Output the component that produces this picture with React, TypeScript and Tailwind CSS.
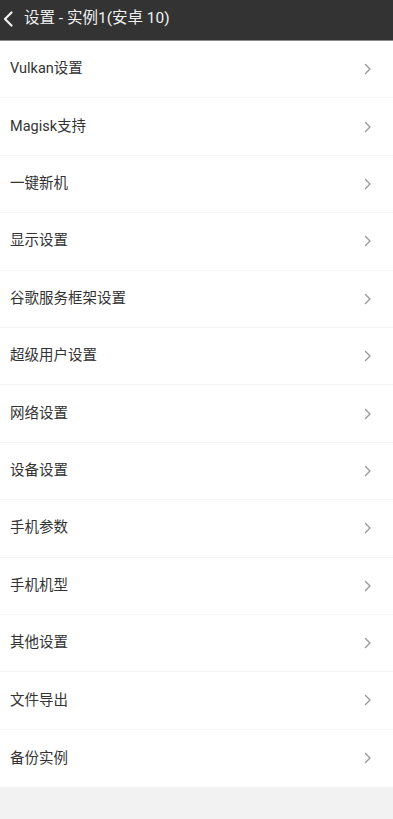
const items = [
  "Vulkan设置",
  "Magisk支持",
  "一键新机",
  "显示设置",
  "谷歌服务框架设置",
  "超级用户设置",
  "网络设置",
  "设备设置",
  "手机参数",
  "手机机型",
  "其他设置",
  "文件导出",
  "备份实例",
];

export default function App() {
  return (
    <div
      className="min-h-[819px] w-[393px] bg-[#f2f2f2]"
      style={{ fontFamily: '"Roboto", "Noto Sans CJK SC", sans-serif' }}
    >
      <header className="flex h-[41px] items-center border-b border-[#8a8a8a] bg-[#333333] pl-[3px] pb-[2px] text-[#f0f0f0]">
        {/* back arrow */}
        <svg width="11" height="16" viewBox="0 0 11 16" fill="none" aria-hidden="true">
          <path d="M8.5 1.5 L2 8 L8.5 14.5" stroke="currentColor" strokeWidth="2.2" strokeLinecap="round" strokeLinejoin="round" />
        </svg>
        <h1 className="ml-[10px] text-[15.5px] leading-none">设置 - 实例1(安卓 10)</h1>
      </header>

      <ul className="bg-white">
        {items.map((label, i) => (
          <li
            key={label}
            className={`flex h-[57.4px] items-center justify-between pl-[10px] pr-[21px] ${
              i < items.length - 1 ? "border-b border-[#f5f5f5]" : ""
            }`}
          >
            <span className="text-[14.5px] text-[#333333]">{label}</span>
            <svg width="8" height="12" viewBox="0 0 8 12" fill="none" className="text-[#9a9a9a]" aria-hidden="true">
              <path d="M1.5 1.5 L6 6 L1.5 10.5" stroke="currentColor" strokeWidth="1.4" strokeLinecap="round" strokeLinejoin="round" />
            </svg>
          </li>
        ))}
      </ul>
    </div>
  );
}
